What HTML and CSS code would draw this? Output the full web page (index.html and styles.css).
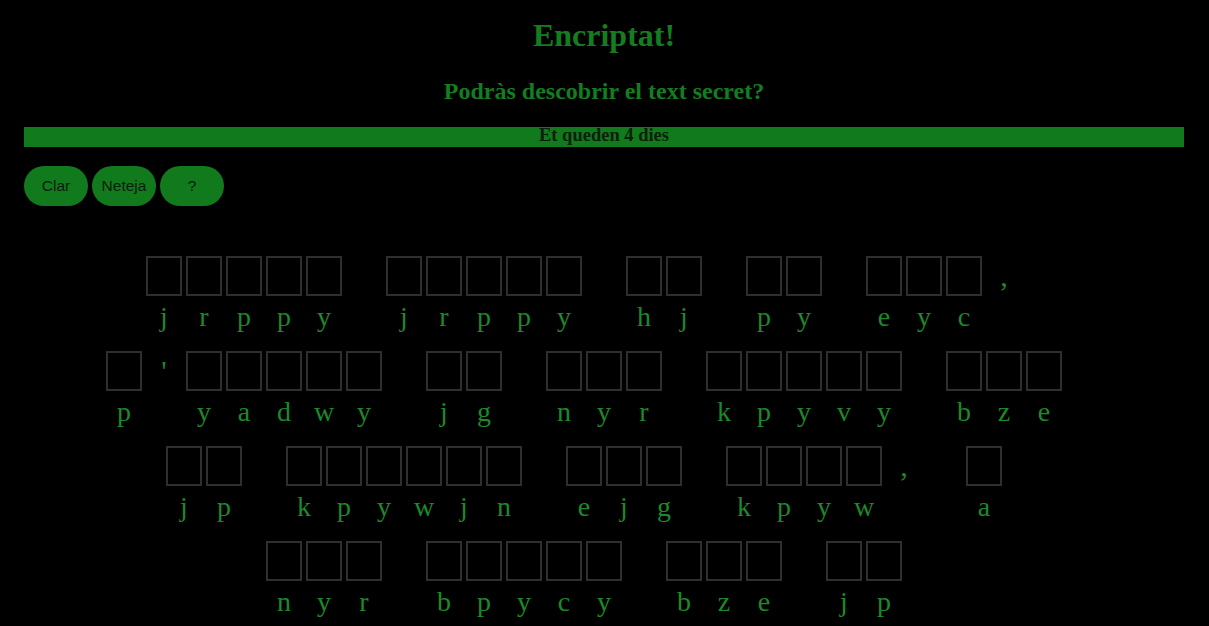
FILE: index.html
```html
<!DOCTYPE html>
<html lang="ca">
<head>
<meta charset="utf-8">
<title>Encriptat!</title>
<link rel="stylesheet" href="styles.css">
</head>
<body>
<h1 class="title">Encriptat!</h1>
<h2 class="subtitle">Podràs descobrir el text secret?</h2>
<div class="bar">Et queden 4 dies</div>
<div class="controls">
  <button class="btn">Clar</button>
  <button class="btn">Neteja</button>
  <button class="btn">?</button>
</div>
<div class="puzzle">
  <div class="row">
    <div class="cell"><div class="box"></div><div class="key">j</div></div>
    <div class="cell"><div class="box"></div><div class="key">r</div></div>
    <div class="cell"><div class="box"></div><div class="key">p</div></div>
    <div class="cell"><div class="box"></div><div class="key">p</div></div>
    <div class="cell"><div class="box"></div><div class="key">y</div></div>
    <div class="cell space"></div>
    <div class="cell"><div class="box"></div><div class="key">j</div></div>
    <div class="cell"><div class="box"></div><div class="key">r</div></div>
    <div class="cell"><div class="box"></div><div class="key">p</div></div>
    <div class="cell"><div class="box"></div><div class="key">p</div></div>
    <div class="cell"><div class="box"></div><div class="key">y</div></div>
    <div class="cell space"></div>
    <div class="cell"><div class="box"></div><div class="key">h</div></div>
    <div class="cell"><div class="box"></div><div class="key">j</div></div>
    <div class="cell space"></div>
    <div class="cell"><div class="box"></div><div class="key">p</div></div>
    <div class="cell"><div class="box"></div><div class="key">y</div></div>
    <div class="cell space"></div>
    <div class="cell"><div class="box"></div><div class="key">e</div></div>
    <div class="cell"><div class="box"></div><div class="key">y</div></div>
    <div class="cell"><div class="box"></div><div class="key">c</div></div>
    <div class="cell"><div class="punct">,</div><div class="key"></div></div>
    <div class="cell space"></div>
  </div>
  <div class="row">
    <div class="cell"><div class="box"></div><div class="key">p</div></div>
    <div class="cell"><div class="punct">'</div><div class="key"></div></div>
    <div class="cell"><div class="box"></div><div class="key">y</div></div>
    <div class="cell"><div class="box"></div><div class="key">a</div></div>
    <div class="cell"><div class="box"></div><div class="key">d</div></div>
    <div class="cell"><div class="box"></div><div class="key">w</div></div>
    <div class="cell"><div class="box"></div><div class="key">y</div></div>
    <div class="cell space"></div>
    <div class="cell"><div class="box"></div><div class="key">j</div></div>
    <div class="cell"><div class="box"></div><div class="key">g</div></div>
    <div class="cell space"></div>
    <div class="cell"><div class="box"></div><div class="key">n</div></div>
    <div class="cell"><div class="box"></div><div class="key">y</div></div>
    <div class="cell"><div class="box"></div><div class="key">r</div></div>
    <div class="cell space"></div>
    <div class="cell"><div class="box"></div><div class="key">k</div></div>
    <div class="cell"><div class="box"></div><div class="key">p</div></div>
    <div class="cell"><div class="box"></div><div class="key">y</div></div>
    <div class="cell"><div class="box"></div><div class="key">v</div></div>
    <div class="cell"><div class="box"></div><div class="key">y</div></div>
    <div class="cell space"></div>
    <div class="cell"><div class="box"></div><div class="key">b</div></div>
    <div class="cell"><div class="box"></div><div class="key">z</div></div>
    <div class="cell"><div class="box"></div><div class="key">e</div></div>
    <div class="cell space"></div>
  </div>
  <div class="row">
    <div class="cell"><div class="box"></div><div class="key">j</div></div>
    <div class="cell"><div class="box"></div><div class="key">p</div></div>
    <div class="cell space"></div>
    <div class="cell"><div class="box"></div><div class="key">k</div></div>
    <div class="cell"><div class="box"></div><div class="key">p</div></div>
    <div class="cell"><div class="box"></div><div class="key">y</div></div>
    <div class="cell"><div class="box"></div><div class="key">w</div></div>
    <div class="cell"><div class="box"></div><div class="key">j</div></div>
    <div class="cell"><div class="box"></div><div class="key">n</div></div>
    <div class="cell space"></div>
    <div class="cell"><div class="box"></div><div class="key">e</div></div>
    <div class="cell"><div class="box"></div><div class="key">j</div></div>
    <div class="cell"><div class="box"></div><div class="key">g</div></div>
    <div class="cell space"></div>
    <div class="cell"><div class="box"></div><div class="key">k</div></div>
    <div class="cell"><div class="box"></div><div class="key">p</div></div>
    <div class="cell"><div class="box"></div><div class="key">y</div></div>
    <div class="cell"><div class="box"></div><div class="key">w</div></div>
    <div class="cell"><div class="punct">,</div><div class="key"></div></div>
    <div class="cell space"></div>
    <div class="cell"><div class="box"></div><div class="key">a</div></div>
    <div class="cell space"></div>
  </div>
  <div class="row">
    <div class="cell"><div class="box"></div><div class="key">n</div></div>
    <div class="cell"><div class="box"></div><div class="key">y</div></div>
    <div class="cell"><div class="box"></div><div class="key">r</div></div>
    <div class="cell space"></div>
    <div class="cell"><div class="box"></div><div class="key">b</div></div>
    <div class="cell"><div class="box"></div><div class="key">p</div></div>
    <div class="cell"><div class="box"></div><div class="key">y</div></div>
    <div class="cell"><div class="box"></div><div class="key">c</div></div>
    <div class="cell"><div class="box"></div><div class="key">y</div></div>
    <div class="cell space"></div>
    <div class="cell"><div class="box"></div><div class="key">b</div></div>
    <div class="cell"><div class="box"></div><div class="key">z</div></div>
    <div class="cell"><div class="box"></div><div class="key">e</div></div>
    <div class="cell space"></div>
    <div class="cell"><div class="box"></div><div class="key">j</div></div>
    <div class="cell"><div class="box"></div><div class="key">p</div></div>
    <div class="cell space"></div>
  </div>
</div>
</body>
</html>
```
FILE: styles.css
```css
html, body {
  background: #000;
}
body {
  margin: 0;
  padding: 0 25px 0 24px;
  font-family: "Liberation Serif", "Times New Roman", serif;
  color: #137d1f;
}
.title {
  margin: 17px 0 0;
  font-size: 32px;
  line-height: 37px;
  font-weight: bold;
  text-align: center;
  color: #137d1f;
}
.subtitle {
  margin: 23px 0 0;
  font-size: 24px;
  line-height: 28px;
  font-weight: bold;
  text-align: center;
  color: #137d1f;
}
.bar {
  margin-top: 22px;
  height: 20px;
  line-height: 17px;
  background: #107a1c;
  color: #0a1f0c;
  font-size: 18.5px;
  font-weight: bold;
  text-align: center;
}
.controls {
  margin-top: 19px;
  display: flex;
  gap: 4px;
}
.btn {
  width: 64px;
  height: 40px;
  padding: 0;
  border: none;
  border-radius: 20px;
  background: #117a1d;
  color: #08200b;
  font-family: "Liberation Sans", Arial, sans-serif;
  font-size: 15.5px;
}
.puzzle {
  margin-top: 48px;
  display: flex;
  flex-direction: column;
  gap: 13px;
}
.row {
  display: flex;
  justify-content: center;
}
.cell {
  width: 40px;
  display: flex;
  flex-direction: column;
  align-items: center;
}
.box {
  box-sizing: border-box;
  width: 36px;
  height: 40px;
  margin: 2px;
  border: 2px solid #2f2f2f;
}
.punct {
  width: 36px;
  height: 40px;
  margin: 2px;
  font-size: 30px;
  line-height: 40px;
  text-align: center;
  color: #1a8a2a;
}
.key {
  height: 38px;
  line-height: 38px;
  font-size: 28px;
  color: #1a8a2a;
  text-align: center;
}
```
